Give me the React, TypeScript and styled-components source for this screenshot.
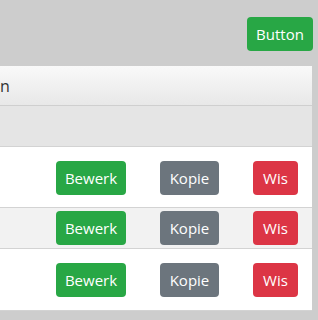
import styled, { createGlobalStyle } from "styled-components";

const GlobalStyle = createGlobalStyle`
  html, body {
    margin: 0;
    padding: 0;
    background: #cdcdcd;
    font-family: "Open Sans", "Noto Sans", sans-serif;
  }
`;

const Page = styled.div`
  width: 318px;
  height: 320px;
  overflow: hidden;
  display: flex;
  flex-direction: column;
`;

// bovenste balk met knop
const TopBar = styled.div`
  height: 66px;
  display: flex;
  justify-content: flex-end;
  align-items: flex-start;
  padding: 17px 5px 0 0;
  box-sizing: border-box;
`;

const Btn = styled.button<{ $kind: "green" | "gray" | "red"; $w: number }>`
  width: ${(p) => p.$w}px;
  height: 34px;
  border: none;
  border-radius: 4px;
  padding: 0;
  font-family: inherit;
  font-size: 15px;
  color: #fff;
  cursor: pointer;
  background: ${(p) =>
    p.$kind === "green" ? "#28a745" : p.$kind === "gray" ? "#6c757d" : "#dc3545"};
`;

const Table = styled.div`
  width: 312px;
  display: flex;
  flex-direction: column;
  background: #fff;
`;

const HeadRow = styled.div`
  height: 39px;
  border-bottom: 1px solid #cfcfcf;
  background: linear-gradient(#f9f9f9, #e8e8e8);
  display: flex;
  align-items: center;
  font-size: 16px;
  color: #333;
`;

const Row = styled.div<{ $bg: string; $h: number; $top: number }>`
  height: ${(p) => p.$h}px;
  box-sizing: border-box;
  border-bottom: 1px solid #d3d3d3;
  background: ${(p) => p.$bg};
  display: grid;
  grid-template-columns: 1fr 70px 59px 45px;
  column-gap: 34px;
  align-items: start;
  padding: ${(p) => p.$top}px 14px 0 0;
`;

const Filler = styled.div`
  flex: 1;
  background: #f2f2f2;
`;

const rows = [
  { bg: "#fff", h: 61, top: 14 },
  { bg: "#f2f2f2", h: 41, top: 3 },
  { bg: "#fff", h: 62, top: 14 },
];

export default () => {
  return (
    <Page>
      <GlobalStyle />
      <TopBar>
        <Btn $kind="green" $w={66}>Button</Btn>
      </TopBar>
      <Table>
        <HeadRow>n</HeadRow>
        <Row $bg="#e5e5e5" $h={41} $top={0} />
        {rows.map((r, i) => (
          <Row key={i} $bg={r.bg} $h={r.h} $top={r.top}>
            <div />
            <Btn $kind="green" $w={70}>Bewerk</Btn>
            <Btn $kind="gray" $w={59}>Kopie</Btn>
            <Btn $kind="red" $w={45}>Wis</Btn>
          </Row>
        ))}
        <Filler />
      </Table>
    </Page>
  );
};
